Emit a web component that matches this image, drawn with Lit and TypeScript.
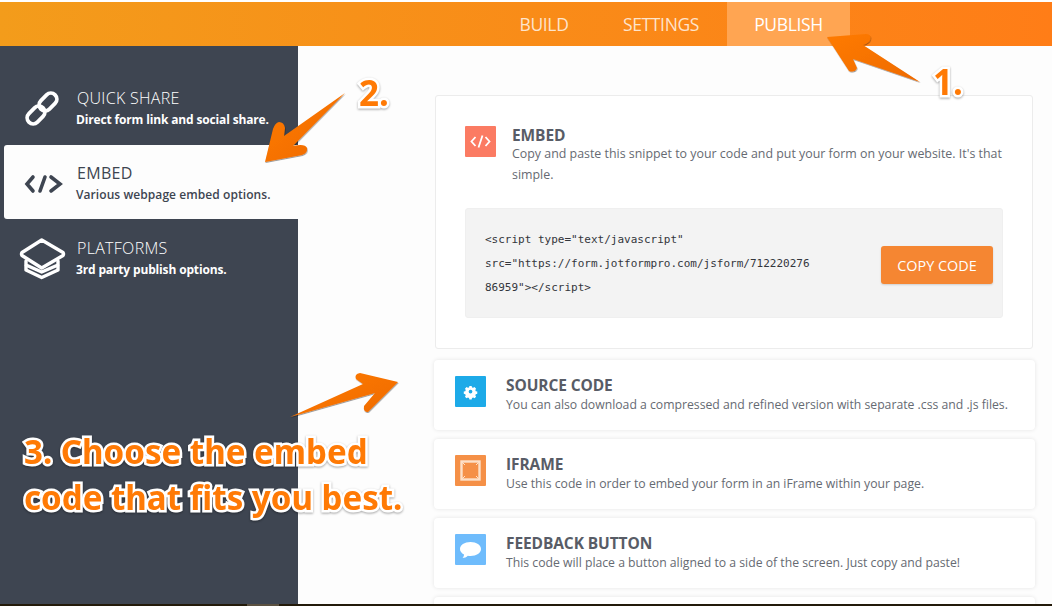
import { LitElement, html, css, svg } from 'lit'
import { customElement } from 'lit/decorators.js'

const linkIcon = svg`
	<g fill="none" stroke="#fff" stroke-width="3.8">
		<rect x="19" y="12" width="20" height="12" rx="6" transform="rotate(-45 29 18)" />
		<rect x="7" y="25" width="20" height="12" rx="6" transform="rotate(-45 17 31)" />
	</g>`

const codeIcon = svg`
	<g fill="none" stroke="#3e4551" stroke-width="3.6" stroke-linecap="round" stroke-linejoin="miter">
		<path d="M14 19 8 26 14 33" />
		<path d="M26 19 21 33" />
		<path d="M32 19 41 26 32 33" />
	</g>`

const layersIcon = svg`
	<g fill="none" stroke="#fff" stroke-width="3.4" stroke-linecap="round" stroke-linejoin="round">
		<path d="M22.7 6 44 18.5Q45 20 44 21.5L22.7 34 3 21.5Q2 20 3 18.5Z" />
		<path d="M7 27 7 31 22.7 38 39 31 39 27" />
		<path d="M7 32 7 36 22.7 43.500 39 36 39 32" />
	</g>`

const gearIcon = svg`
	<g fill="#fff" transform="translate(3.9 3.900) scale(0.75)">
		<path fill-rule="evenodd" d="M14 8h3l.5 2 1.5.6 1.800-1 2.100 2.100-1 1.800.6 1.500 2 .5v3l-2 .5-.6 1.500 1 1.800-2.100 2.100-1.800-1-1.500.6-.5 2h-3l-.5-2-1.500-.6-1.800 1-2.100-2.100 1-1.800-.6-1.500-2-.5v-3l2-.5.6-1.500-1-1.800 2.100-2.100 1.800 1 1.500-.6zM15.500 13a2.500 2.500 0 1 0 0 5 2.500 2.500 0 0 0 0-5z" />
	</g>`

const frameIcon = svg`
	<rect x="6.500" y="6.500" width="18" height="18" fill="none" stroke="#fde0c8" stroke-width="2.400" />
	<path d="M6 6 10 10M25 6 21 10M6 25 10 21M25 25 21 21" stroke="#fde0c8" stroke-width="1" />`

const bubbleIcon = svg`
	<path fill="#fff" d="M15.500 8C21.500 8 26 11 26 15S21.500 22 15.500 22C14.500 22 13.500 22 12.800 21.800 11.500 23.200 9.500 24 7.500 24 8.500 23 9 21.800 9 20.500 6.500 19.200 5 17.300 5 15 5 11 9.500 8 15.500 8Z" />`

const embedGlyph = svg`
	<g fill="none" stroke="#fff" stroke-width="1.800">
		<path d="M10.500 11 6.500 15.500 10.500 20" />
		<path d="M17.500 9.500 13.500 21.500" />
		<path d="M20.500 11 24.500 15.500 20.500 20" />
	</g>`

const navItems = [
	{ title: 'QUICK SHARE', sub: 'Direct form link and social share.', icon: linkIcon },
	{ title: 'EMBED', sub: 'Various webpage embed options.', icon: codeIcon, active: true },
	{ title: 'PLATFORMS', sub: '3rd party publish options.', icon: layersIcon },
]

const options = [
	{ title: 'SOURCE CODE', desc: 'You can also download a compressed and refined version with separate .css and .js files.', color: '#1daae8', icon: gearIcon },
	{ title: 'IFRAME', desc: 'Use this code in order to embed your form in an iFrame within your page.', color: '#f59047', icon: frameIcon },
	{ title: 'FEEDBACK BUTTON', desc: 'This code will place a button aligned to a side of the screen. Just copy and paste!', color: '#6fbcfc', icon: bubbleIcon },
]

@customElement('app-root')
export class AppRoot extends LitElement {
	static styles = css`
		:host {
			display: block;
			position: relative;
			width: 1052px;
			height: 606px;
			overflow: hidden;
			background: #fff;
			font-family: 'Open Sans', sans-serif;
		}

		.page {
			display: flex;
			flex-direction: column;
			height: 604px;
			padding-top: 2px;
			box-sizing: border-box;
		}

		.topbar {
			flex: none;
			height: 44px;
			display: flex;
			padding-left: 492px;
			background: linear-gradient(90deg, #f39c1b 0%, #f98c18 50%, #ff7d17 100%);
		}

		.tab {
			display: flex;
			align-items: center;
			justify-content: center;
			width: 54px;
			padding: 0 27px 0 25px;
			font-size: 17.500px;
			letter-spacing: -0.35px;
			white-space: nowrap;
			color: rgba(255, 255, 255, 0.78);
		}

		.tab.wide {
			width: 80px;
			padding: 0 26px 0 23px;
		}

		.tab.active {
			width: 69px;
			padding: 0 27px;
			background: #ffa552;
			color: #fff;
		}

		.body {
			flex: 1;
			display: flex;
			min-height: 0;
		}

		.sidebar {
			flex: none;
			width: 298px;
			box-sizing: border-box;
			padding: 24px 0 0 4px;
			background: #3e4551;
		}

		.nav-item {
			display: grid;
			grid-template-columns: 72px 1fr;
			align-items: center;
			height: 75px;
			color: #fff;
		}

		.nav-item.active {
			height: 74px;
			margin-bottom: 1px;
			background: #fdfdfd;
			color: #3e4551;
			border-radius: 3px 0 0 3px;
		}

		.nav-item svg {
			width: 48px;
			height: 48px;
			margin-left: 15px;
		}

		.nav-text {
			padding-top: 3px;
		}

		.nav-title {
			font-size: 16px;
			font-weight: 300;
			letter-spacing: 0.3px;
			line-height: 21px;
			margin-left: 1px;
		}

		.nav-item.active .nav-title {
			font-weight: 400;
		}

		.nav-sub {
			margin-top: 1px;
			font-size: 12px;
			font-weight: 700;
			letter-spacing: -0.15px;
			line-height: 20px;
			white-space: nowrap;
		}

		.nav-item.active .nav-sub {
			font-weight: 600;
			letter-spacing: 0.07px;
		}

		.main {
			flex: 1;
			min-width: 0;
			overflow: hidden;
			box-sizing: border-box;
			padding: 49px 17px 0 136px;
			background: #fdfdfd;
		}

		.embed-card {
			box-sizing: border-box;
			height: 254px;
			margin: 0 2px 11px 1px;
			padding: 30px 29px;
			background: #fff;
			border: 1px solid #ececec;
			border-radius: 3px;
		}

		.embed-head {
			display: grid;
			grid-template-columns: 47px 1fr;
			height: 82px;
		}

		.icon-box {
			width: 31px;
			height: 31px;
			border-radius: 1px;
		}

		.embed-head h2,
		.option h3 {
			margin: 0;
			font-size: 15.500px;
			font-weight: 700;
			letter-spacing: -0.1px;
			line-height: 19px;
			color: #585c66;
		}

		.embed-head p {
			margin: -2px 0 0;
			font-size: 12.400px;
			line-height: 21px;
			color: #666a72;
		}

		.code-box {
			display: flex;
			align-items: center;
			justify-content: space-between;
			box-sizing: border-box;
			height: 110px;
			padding: 0 9px 0 19px;
			background: #f3f3f3;
			border: 1px solid #efefef;
			border-radius: 3px;
		}

		pre {
			margin: 2px 0 0;
			font-family: 'DejaVu Sans Mono', monospace;
			font-size: 11px;
			line-height: 24px;
			color: #33363c;
		}

		.copy {
			flex: none;
			width: 112px;
			height: 38px;
			margin-top: 4px;
			display: flex;
			align-items: center;
			justify-content: center;
			font-size: 14.400px;
			color: #fff;
			background: #f58632;
			border-radius: 3px;
			box-shadow: 0 1px 2px rgba(0, 0, 0, 0.15);
		}

		.option {
			display: grid;
			grid-template-columns: 51px 1fr;
			box-sizing: border-box;
			height: 70px;
			margin-bottom: 9px;
			padding: 16px 20px 16px 21px;
			background: #fff;
			border-radius: 4px;
			box-shadow: 0 0 4px rgba(0, 0, 0, 0.1);
		}

		.option p {
			margin: 0;
			font-size: 12.220px;
			line-height: 20px;
			color: #666a72;
			white-space: nowrap;
		}

		.bottom-edge {
			height: 2px;
			background: #231a0a;
		}

		.bottom-mark {
			width: 32px;
			height: 2px;
			margin-left: 247px;
			background: #5a5040;
		}

		.overlay {
			position: absolute;
			left: 0;
			top: 0;
			width: 1052px;
			height: 606px;
			pointer-events: none;
		}

		.note {
			position: absolute;
			margin: 0;
			font-family: 'Noto Sans', sans-serif;
			font-weight: 700;
			color: #ff7a05;
			-webkit-text-stroke: 5px #fff;
			paint-order: stroke fill;
			filter: drop-shadow(0 1px 1px rgba(0, 0, 0, 0.35));
		}

		.note.num {
			font-size: 35px;
			line-height: 38px;
		}

		.note.one {
			left: 933px;
			top: 63px;
		}

		.note.two {
			left: 359px;
			top: 74px;
		}

		.note.three {
			left: 24px;
			top: 429px;
			font-size: 33.100px;
			line-height: 45.500px;
			white-space: nowrap;
		}
	`

	render() {
		return html`
			<div class="page">
				<div class="topbar">
					<div class="tab">BUILD</div>
					<div class="tab wide">SETTINGS</div>
					<div class="tab active">PUBLISH</div>
				</div>
				<div class="body">
					<nav class="sidebar">
						${navItems.map(
							(item) => html`
								<div class="nav-item ${item.active ? 'active' : ''}">
									<svg viewBox="0 0 48 48">${item.icon}</svg>
									<div class="nav-text">
										<div class="nav-title">${item.title}</div>
										<div class="nav-sub">${item.sub}</div>
									</div>
								</div>
							`
						)}
					</nav>
					<main class="main">
						<section class="embed-card">
							<div class="embed-head">
								<svg class="icon-box" style="background:#fb7b63" viewBox="0 0 31 31">${embedGlyph}</svg>
								<div>
									<h2>EMBED</h2>
									<p>Copy and paste this snippet to your code and put your form on your website. It's that simple.</p>
								</div>
							</div>
							<div class="code-box">
								<pre>&lt;script type="text/javascript"
src="https://form.jotformpro.com/jsform/712220276
86959"&gt;&lt;/script&gt;</pre>
								<div class="copy">COPY CODE</div>
							</div>
						</section>
						${options.map(
							(o) => html`
								<section class="option">
									<svg class="icon-box" style="background:${o.color}" viewBox="0 0 31 31">${o.icon}</svg>
									<div>
										<h3>${o.title}</h3>
										<p>${o.desc}</p>
									</div>
								</section>
							`
						)}
						<section class="option"></section>
					</main>
				</div>
			</div>
			<div class="bottom-edge"><div class="bottom-mark"></div></div>
			<svg class="overlay" viewBox="0 0 1052 606">
				<defs>
					<linearGradient id="arrow" x1="0" y1="0" x2="1" y2="1">
						<stop offset="0" stop-color="#ff7b00" />
						<stop offset="1" stop-color="#ee6a05" />
					</linearGradient>
					<filter id="soft" x="-10%" y="-10%" width="120%" height="120%">
						<feDropShadow dx="0.500" dy="1" stdDeviation="0.600" flood-color="#000" flood-opacity="0.4" />
					</filter>
				</defs>
				<g fill="url(#arrow)" filter="url(#soft)">
					<path d="M827 37 866 34Q872 34 870 40 869 43 863 45L920 82 853 59 857 68Q855 73 849 71Z" />
					<path d="M345 93 284 136 285 128Q284 122 279 122 275 123 273 129L265 162 302 155Q308 153 307 148 305 143 293 146Z" />
					<path d="M290 417 363 384 356 379Q354 374 360 373L398 382 368 412Q363 412 364 406L375 393Z" />
				</g>
			</svg>
			<div class="note num one">1.</div>
			<div class="note num two">2.</div>
			<div class="note three">3. Choose the embed<br />code that fits you best.</div>
		`
	}
}
